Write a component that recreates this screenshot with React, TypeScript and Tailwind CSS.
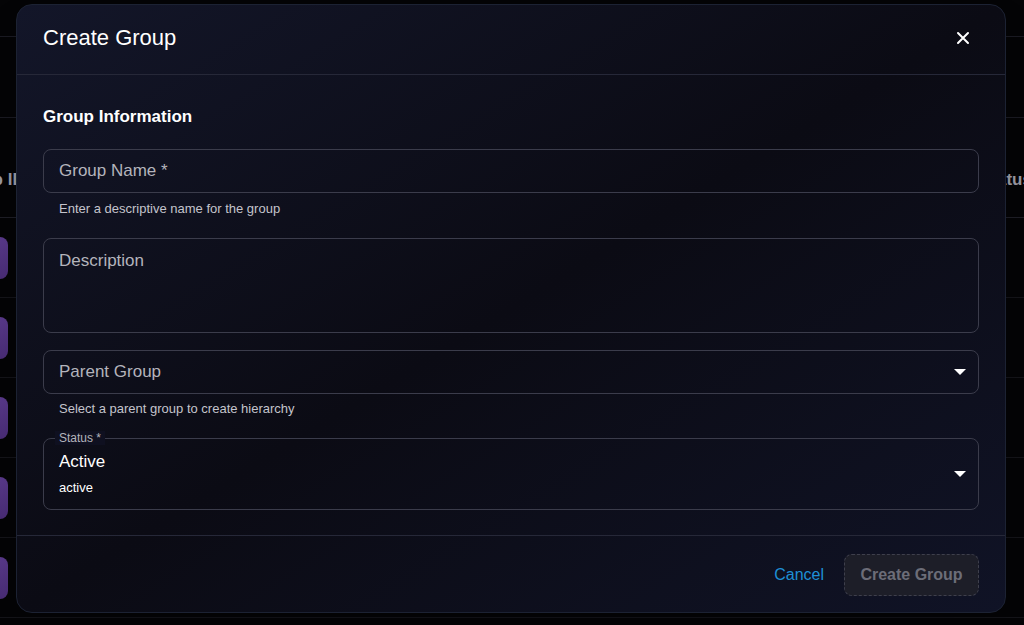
import React from "react";

const font = { fontFamily: '"Liberation Sans", Arial, sans-serif' };

function Caret() {
  return (
    <svg width="12" height="6" viewBox="0 0 12 6" className="text-white" aria-hidden="true">
      <path d="M0 0 L12 0 L6 6 Z" fill="currentColor" />
    </svg>
  );
}

function CloseIcon() {
  return (
    <svg width="14" height="14" viewBox="0 0 14 14" aria-hidden="true">
      <path d="M2 2 L12 12 M12 2 L2 12" stroke="white" strokeWidth="2" strokeLinecap="round" />
    </svg>
  );
}

function Background() {
  const rows = [0, 1, 2, 3, 4];
  return (
    <div className="h-[625px] w-full bg-[#040406] overflow-hidden">
      <div className="h-[37px] border-b border-[#1a1a22]" />
      <div className="h-[81px] border-b border-[#1a1a22]" />
      <div className="flex h-[100px] items-center justify-between border-b border-[#1e1e26] pt-[24px] text-[17px] font-bold text-[#9a9aa4]">
        <span className="-ml-[48px] w-[74px] whitespace-nowrap">Group ID</span>
        <span className="w-[60px] whitespace-nowrap pl-[2px] -mr-[14px]">Status</span>
      </div>
      {rows.map((r) => (
        <div key={r} className="flex h-[80px] items-center border-b border-[#141419]">
          <div className="-ml-[34px] h-[42px] w-[42px] rounded-lg bg-gradient-to-b from-[#5a3a8c] to-[#4a2d78]" />
        </div>
      ))}
    </div>
  );
}

export default function App() {
  return (
    <div className="relative h-[625px] w-[1024px] overflow-hidden" style={font}>
      <Background />

      <div className="absolute left-[16px] top-[4px] flex h-[609px] w-[990px] flex-col rounded-[16px] border border-[#1c2233] bg-gradient-to-br from-[#131629] via-[#0b0b14] to-[#101326] shadow-2xl">
        {/* header */}
        <div className="flex h-[70px] items-center justify-between border-b border-[#262838] pb-[4px] pl-[26px] pr-[31px]">
          <h2 className="text-[22px] text-white">Create Group</h2>
          <button type="button" className="p-1">
            <CloseIcon />
          </button>
        </div>

        {/* body */}
        <div className="flex-1 px-[26px] pt-[29px]">
          <h3 className="text-[17px] font-bold text-white">Group Information</h3>

          <div className="mt-[19px] flex h-[44px] items-center rounded-lg border border-[#3b3c4b] px-[15px] text-[17px] text-[#b4b4bc]">
            Group Name *
          </div>
          <p className="mt-[6px] pl-[16px] text-[13px] text-[#c4c4cc]">Enter a descriptive name for the group</p>

          <div className="mt-[20px] h-[95px] rounded-lg border border-[#3b3c4b] px-[15px] pt-[9px] text-[17px] text-[#b4b4bc]">
            Description
          </div>

          <div className="mt-[17px] flex h-[44px] items-center justify-between rounded-lg border border-[#3b3c4b] pl-[15px] pr-[12px] text-[17px] text-[#b4b4bc]">
            <span>Parent Group</span>
            <Caret />
          </div>
          <p className="mt-[5px] pl-[16px] text-[13px] text-[#c4c4cc]">Select a parent group to create hierarchy</p>

          <div className="relative mt-[19px] flex h-[72px] items-center justify-between rounded-lg border border-[#3b3c4b] pl-[15px] pr-[12px]">
            <span className="absolute -top-[8px] left-[11px] bg-[#0f1020] px-[4px] text-[12px] leading-[14px] text-[#b4b4bc]">
              Status *
            </span>
            <div className="flex flex-col">
              <span className="text-[17px] leading-[20px] text-white">Active</span>
              <span className="mt-[8px] text-[13px] leading-[15px] text-white">active</span>
            </div>
            <Caret />
          </div>
        </div>

        {/* footer */}
        <div className="flex h-[77px] items-center justify-end gap-[20px] border-t border-[#262838] px-[26px] pt-[1px]">
          <button type="button" className="text-[16px] text-[#1e8fd6]">Cancel</button>
          <button
            type="button"
            disabled
            className="h-[42px] w-[135px] rounded-lg border border-dashed border-[#3e3f4c] bg-[#1d1e28] text-[16px] font-bold text-[#6c6d78]"
          >
            Create Group
          </button>
        </div>
      </div>
    </div>
  );
}
